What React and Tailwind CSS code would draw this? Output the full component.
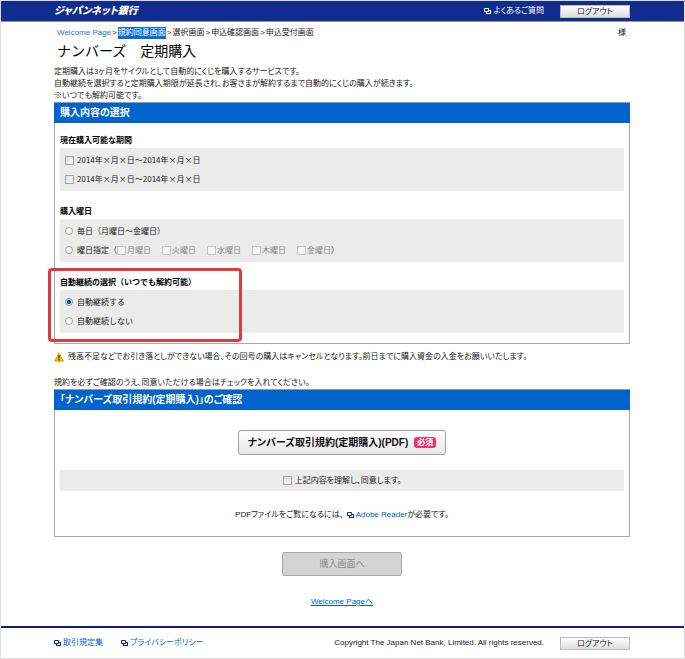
import React from 'react';

const sans = "font-['Liberation_Sans','Noto_Sans_CJK_JP',sans-serif]";
const wide = "font-['Noto_Sans_CJK_JP',sans-serif] [font-feature-settings:normal]";

function WindowIcon({ className = 'text-[#14288c]' }) {
  return (
    <svg className={'h-[7px] w-[7px] shrink-0 ' + className} viewBox="0 0 7 7" fill="none" stroke="currentColor" aria-hidden="true">
      <path d="M.5.5h4v3h-4z" />
      <path d="M5 2.5h1.5v3h-4V4" strokeWidth="1.2" />
    </svg>
  );
}

function WarningIcon() {
  return (
    <svg className="h-[10px] w-[10px] shrink-0" viewBox="0 0 10 10" aria-hidden="true">
      <path d="M5 .8 9.5 9.2H.5z" fill="#ffb400" stroke="#e09a00" strokeWidth=".8" strokeLinejoin="round" />
      <path d="M5 3.2v3.2M5 7.2v1.2" stroke="#222" strokeWidth="1.2" />
    </svg>
  );
}

function Check({ id, pale }) {
  return (
    <input
      id={id}
      type="checkbox"
      className={
        'm-0 h-[9px] w-[9px] shrink-0 appearance-none border bg-gradient-to-br checked:bg-[#1f4fa8] ' +
        (pale ? 'border-[#c4c4c4] from-[#f6f6f6] to-[#f6f6f6]' : 'border-[#a3a3a3] from-[#dcdcdc] to-white')
      }
    />
  );
}

function Radio({ id, name, defaultChecked }) {
  return (
    <input
      id={id}
      name={name}
      type="radio"
      defaultChecked={defaultChecked}
      className="m-0 h-[8px] w-[8px] shrink-0 appearance-none rounded-full border border-[#a3a3a3] bg-[#f4f4f4] checked:border-[#8492b8] checked:bg-[radial-gradient(circle,#0c3a9e_0,#1d50b4_40%,#dfe6f5_60%)]"
    />
  );
}

function LogoutButton() {
  return (
    <button type="button" className="h-[13px] w-[70px] border border-[#bbb] bg-gradient-to-b from-white to-[#dedede] text-[8px] leading-[11px] text-[#222]">
      ログアウト
    </button>
  );
}

function PanelHeading({ children }) {
  return (
    <h2 className="-mx-px flex h-[21px] items-center border-t border-[#9a9a9a] bg-[#0064cc] px-[6px] text-[10px] font-bold text-white">
      {children}
    </h2>
  );
}

function Group({ title, highlighted, children }) {
  return (
    <fieldset className={'relative text-[8px] ' + wide}>
      <legend className="mb-[2px] leading-[13px] font-bold text-black">{title}</legend>
      <div className="flex h-[43px] flex-col justify-center gap-[6px] bg-[#ebebeb] px-[5px]">{children}</div>
      {highlighted && (
        <div className="pointer-events-none absolute -top-[22px] -left-[12px] h-[74px] w-[194px] rounded-[4px] border-[3px] border-[#e0393e]" />
      )}
    </fieldset>
  );
}

function Row({ children }) {
  return <div className="flex h-[13px] items-center">{children}</div>;
}

const days = ['月曜日', '火曜日', '水曜日', '木曜日', '金曜日'];
const periods = ['2014年×月×日～2014年×月×日', '2014年×月×日～2014年×月×日'];

export default function App() {
  return (
    <div lang="ja" className={sans + " border border-[#dcdcdc] bg-white text-[8px] leading-[12px] text-[#222] [font-feature-settings:'palt']"}>
      <header className="flex h-[21px] items-center border-b border-[#8b93b8] bg-[#102c8c] pr-[54px] pl-[53px] text-white">
        <p className="text-[10px] font-black italic">ジャパンネット銀行</p>
        <a href="#faq" className="ml-auto flex items-center gap-[3px]">
          <WindowIcon className="text-white" />
          よくあるご質問
        </a>
        <span className="ml-[16px] flex"><LogoutButton /></span>
      </header>

      <main className="pr-[54px] pl-[53px]">
        <div className="flex items-center justify-between pt-[5px] pr-[4px] pl-[3px]">
          <nav className="flex gap-px" aria-label="手続きの流れ">
            <a href="#welcome" className="text-[#1878d8]">Welcome Page</a>
            <span>&gt;</span>
            <span className="bg-[#0c6cd0] text-white">規約同意画面</span>
            <span>&gt;</span>
            <span>選択画面</span>
            <span>&gt;</span>
            <span>申込確認画面</span>
            <span>&gt;</span>
            <span>申込受付画面</span>
          </nav>
          <span>様</span>
        </div>
        <h1 className="mt-[2px] pl-[3px] text-[14px] leading-[20px] text-black [font-feature-settings:normal]">ナンバーズ　定期購入</h1>
        <p className="mt-[5px]">
          定期購入は3ヶ月をサイクルとして自動的にくじを購入するサービスです。<br />
          自動継続を選択すると定期購入期限が延長され、お客さまが解約するまで自動的にくじの購入が続きます。<br />
          ※いつでも解約可能です。
        </p>

        <section className="border border-t-0 border-[#aaa]">
          <PanelHeading>購入内容の選択</PanelHeading>
          <form className="flex flex-col gap-[13px] px-[5px] py-[10px]">
            <Group title="現在購入可能な期間">
              {periods.map((text, i) => (
                <Row key={i}>
                  <Check id={'period' + i} />
                  <label htmlFor={'period' + i} className="pl-[3px]">{text}</label>
                </Row>
              ))}
            </Group>
            <Group title="購入曜日">
              <Row>
                <Radio id="everyday" name="weekday" />
                <label htmlFor="everyday" className="pl-[4px]">毎日（月曜日～金曜日）</label>
              </Row>
              <Row>
                <Radio id="chosen" name="weekday" />
                <label htmlFor="chosen" className="pl-[4px]">曜日指定（</label>
                <span className="flex gap-[11px]">
                  {days.map((day, i) => (
                    <span key={day} className="flex items-center text-[#888]">
                      <Check id={'day' + i} pale />
                      <label htmlFor={'day' + i} className="pl-px">{day}</label>
                    </span>
                  ))}
                </span>
                <span>）</span>
              </Row>
            </Group>
            <Group title="自動継続の選択（いつでも解約可能）" highlighted>
              <Row>
                <Radio id="renew" name="renewal" defaultChecked />
                <label htmlFor="renew" className="pl-[4px]">自動継続する</label>
              </Row>
              <Row>
                <Radio id="norenew" name="renewal" />
                <label htmlFor="norenew" className="pl-[4px]">自動継続しない</label>
              </Row>
            </Group>
          </form>
        </section>

        <p className="mt-[7px] flex items-center gap-[4px]">
          <WarningIcon />
          残高不足などでお引き落としができない場合、その回号の購入はキャンセルとなります。前日までに購入資金の入金をお願いいたします。
        </p>
        <p className="mt-[14px]">規約を必ずご確認のうえ、同意いただける場合はチェックを入れてください。</p>

        <section className="border border-t-0 border-[#aaa]">
          <PanelHeading>「ナンバーズ取引規約(定期購入)」のご確認</PanelHeading>
          <div className="flex flex-col items-center px-[5px] pt-[20px] pb-[15px]">
            <button type="button" className="flex h-[25px] w-[208px] items-center justify-center gap-[6px] rounded-[3px] border border-[#a0a0a0] bg-gradient-to-b from-white to-[#e6e6e6] text-[10px] font-bold text-[#111]">
              ナンバーズ取引規約(定期購入)(PDF)
              <span className="h-[11px] rounded-[3px] bg-[#f5326e] px-[3px] text-[8px] leading-[11px] text-white">必須</span>
            </button>
            <div className="mt-[15px] flex h-[21px] w-full items-center justify-center gap-[3px] bg-[#ebebeb]">
              <Check id="agree" />
              <label htmlFor="agree">上記内容を理解し、同意します。</label>
            </div>
            <p className="mt-[18px] flex items-center">
              PDFファイルをご覧になるには、
              <a href="#reader" className="ml-[3px] flex items-center gap-[2px] text-[#0064cc]"><WindowIcon />Adobe Reader</a>
              が必要です。
            </p>
          </div>
        </section>

        <div className="flex flex-col items-center pt-[15px] pb-[18px]">
          <button type="button" disabled className="h-[24px] w-[120px] rounded-[3px] border border-[#a6a6a6] bg-[#d4d4d4] text-[9px] text-[#8a8a8a]">
            購入画面へ
          </button>
          <a href="#welcome" className="mt-[20px] text-[#0064cc] underline">Welcome Pageへ</a>
        </div>
      </main>

      <footer className="flex h-[32px] items-center border-t-2 border-[#0c1c80] pr-[54px] pl-[53px]">
        <a href="#terms" className="flex items-center gap-[2px] text-[#0064cc]"><WindowIcon />取引規定集</a>
        <a href="#privacy" className="ml-[18px] flex items-center gap-[2px] text-[#0064cc]"><WindowIcon />プライバシーポリシー</a>
        <small className="ml-auto text-[8px]">Copyright The Japan Net Bank, Limited. All rights reserved.</small>
        <span className="ml-[16px] flex"><LogoutButton /></span>
      </footer>
    </div>
  );
}
